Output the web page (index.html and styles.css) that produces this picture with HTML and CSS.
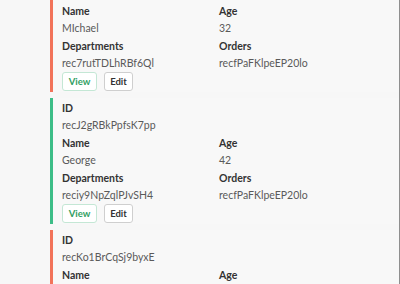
FILE: index.html
```html
<!DOCTYPE html>
<html>
<head>
<meta charset="utf-8">
<link rel="stylesheet" href="styles.css">
</head>
<body>
<div class="page">
  <div class="list">
    <div class="card red">
      <div class="grid">
        <div class="field"><div class="label">ID</div><div class="value">recAbc123Xyz</div></div>
        <div class="field"></div>
        <div class="field"><div class="label">Name</div><div class="value">MIchael</div></div>
        <div class="field"><div class="label">Age</div><div class="value">32</div></div>
        <div class="field"><div class="label">Departments</div><div class="value">rec7rutTDLhRBf6Ql</div></div>
        <div class="field"><div class="label">Orders</div><div class="value">recfPaFKlpeEP20lo</div></div>
      </div>
      <div class="actions"><button class="btn view">View</button><button class="btn edit">Edit</button></div>
    </div>
    <div class="card green">
      <div class="grid">
        <div class="field"><div class="label">ID</div><div class="value">recJ2gRBkPpfsK7pp</div></div>
        <div class="field"></div>
        <div class="field"><div class="label">Name</div><div class="value">George</div></div>
        <div class="field"><div class="label">Age</div><div class="value">42</div></div>
        <div class="field"><div class="label">Departments</div><div class="value">reciy9NpZqlPJvSH4</div></div>
        <div class="field"><div class="label">Orders</div><div class="value">recfPaFKlpeEP20lo</div></div>
      </div>
      <div class="actions"><button class="btn view">View</button><button class="btn edit">Edit</button></div>
    </div>
    <div class="card red">
      <div class="grid">
        <div class="field"><div class="label">ID</div><div class="value">recKo1BrCqSj9byxE</div></div>
        <div class="field"></div>
        <div class="field"><div class="label">Name</div><div class="value">Anna</div></div>
        <div class="field"><div class="label">Age</div><div class="value">28</div></div>
      </div>
    </div>
  </div>
</div>
</body>
</html>
```
FILE: styles.css
```css
html, body {
  margin: 0;
  padding: 0;
  height: 100%;
  overflow: hidden;
  background: #f7f7f7;
}
body {
  font-family: Lato, "Open Sans", sans-serif;
}
.page {
  height: 284px;
  padding-left: 50px;
  border-right: 1px solid #8f8f8f;
  box-sizing: border-box;
  overflow: hidden;
}
.list {
  margin-top: -34px;
  display: flex;
  flex-direction: column;
  gap: 6px;
}
.card {
  border-left: 3px solid #f2735a;
  padding: 2px 0 1px 9px;
  background: #f8f8f8;
}
.card.green {
  border-left-color: #3dbd87;
}
.grid {
  display: grid;
  grid-template-columns: 157px 1fr;
  row-gap: 1px;
}
.label {
  font-size: 10.5px;
  font-weight: 700;
  line-height: 17px;
  color: #333333;
}
.value {
  font-size: 10.5px;
  line-height: 17px;
  color: #5a5a5a;
}
.actions {
  display: flex;
  gap: 7px;
}
.btn {
  font-family: Lato, "Open Sans", sans-serif;
  font-size: 9.5px;
  font-weight: 700;
  height: 19px;
  padding: 0;
  border-radius: 3px;
  background: #ffffff;
  cursor: pointer;
}
.btn.view {
  width: 35px;
  color: #2f9e63;
  border: 1px solid #c4e7d5;
}
.btn.edit {
  width: 29px;
  color: #333333;
  border: 1px solid #cfcfcf;
}
```
